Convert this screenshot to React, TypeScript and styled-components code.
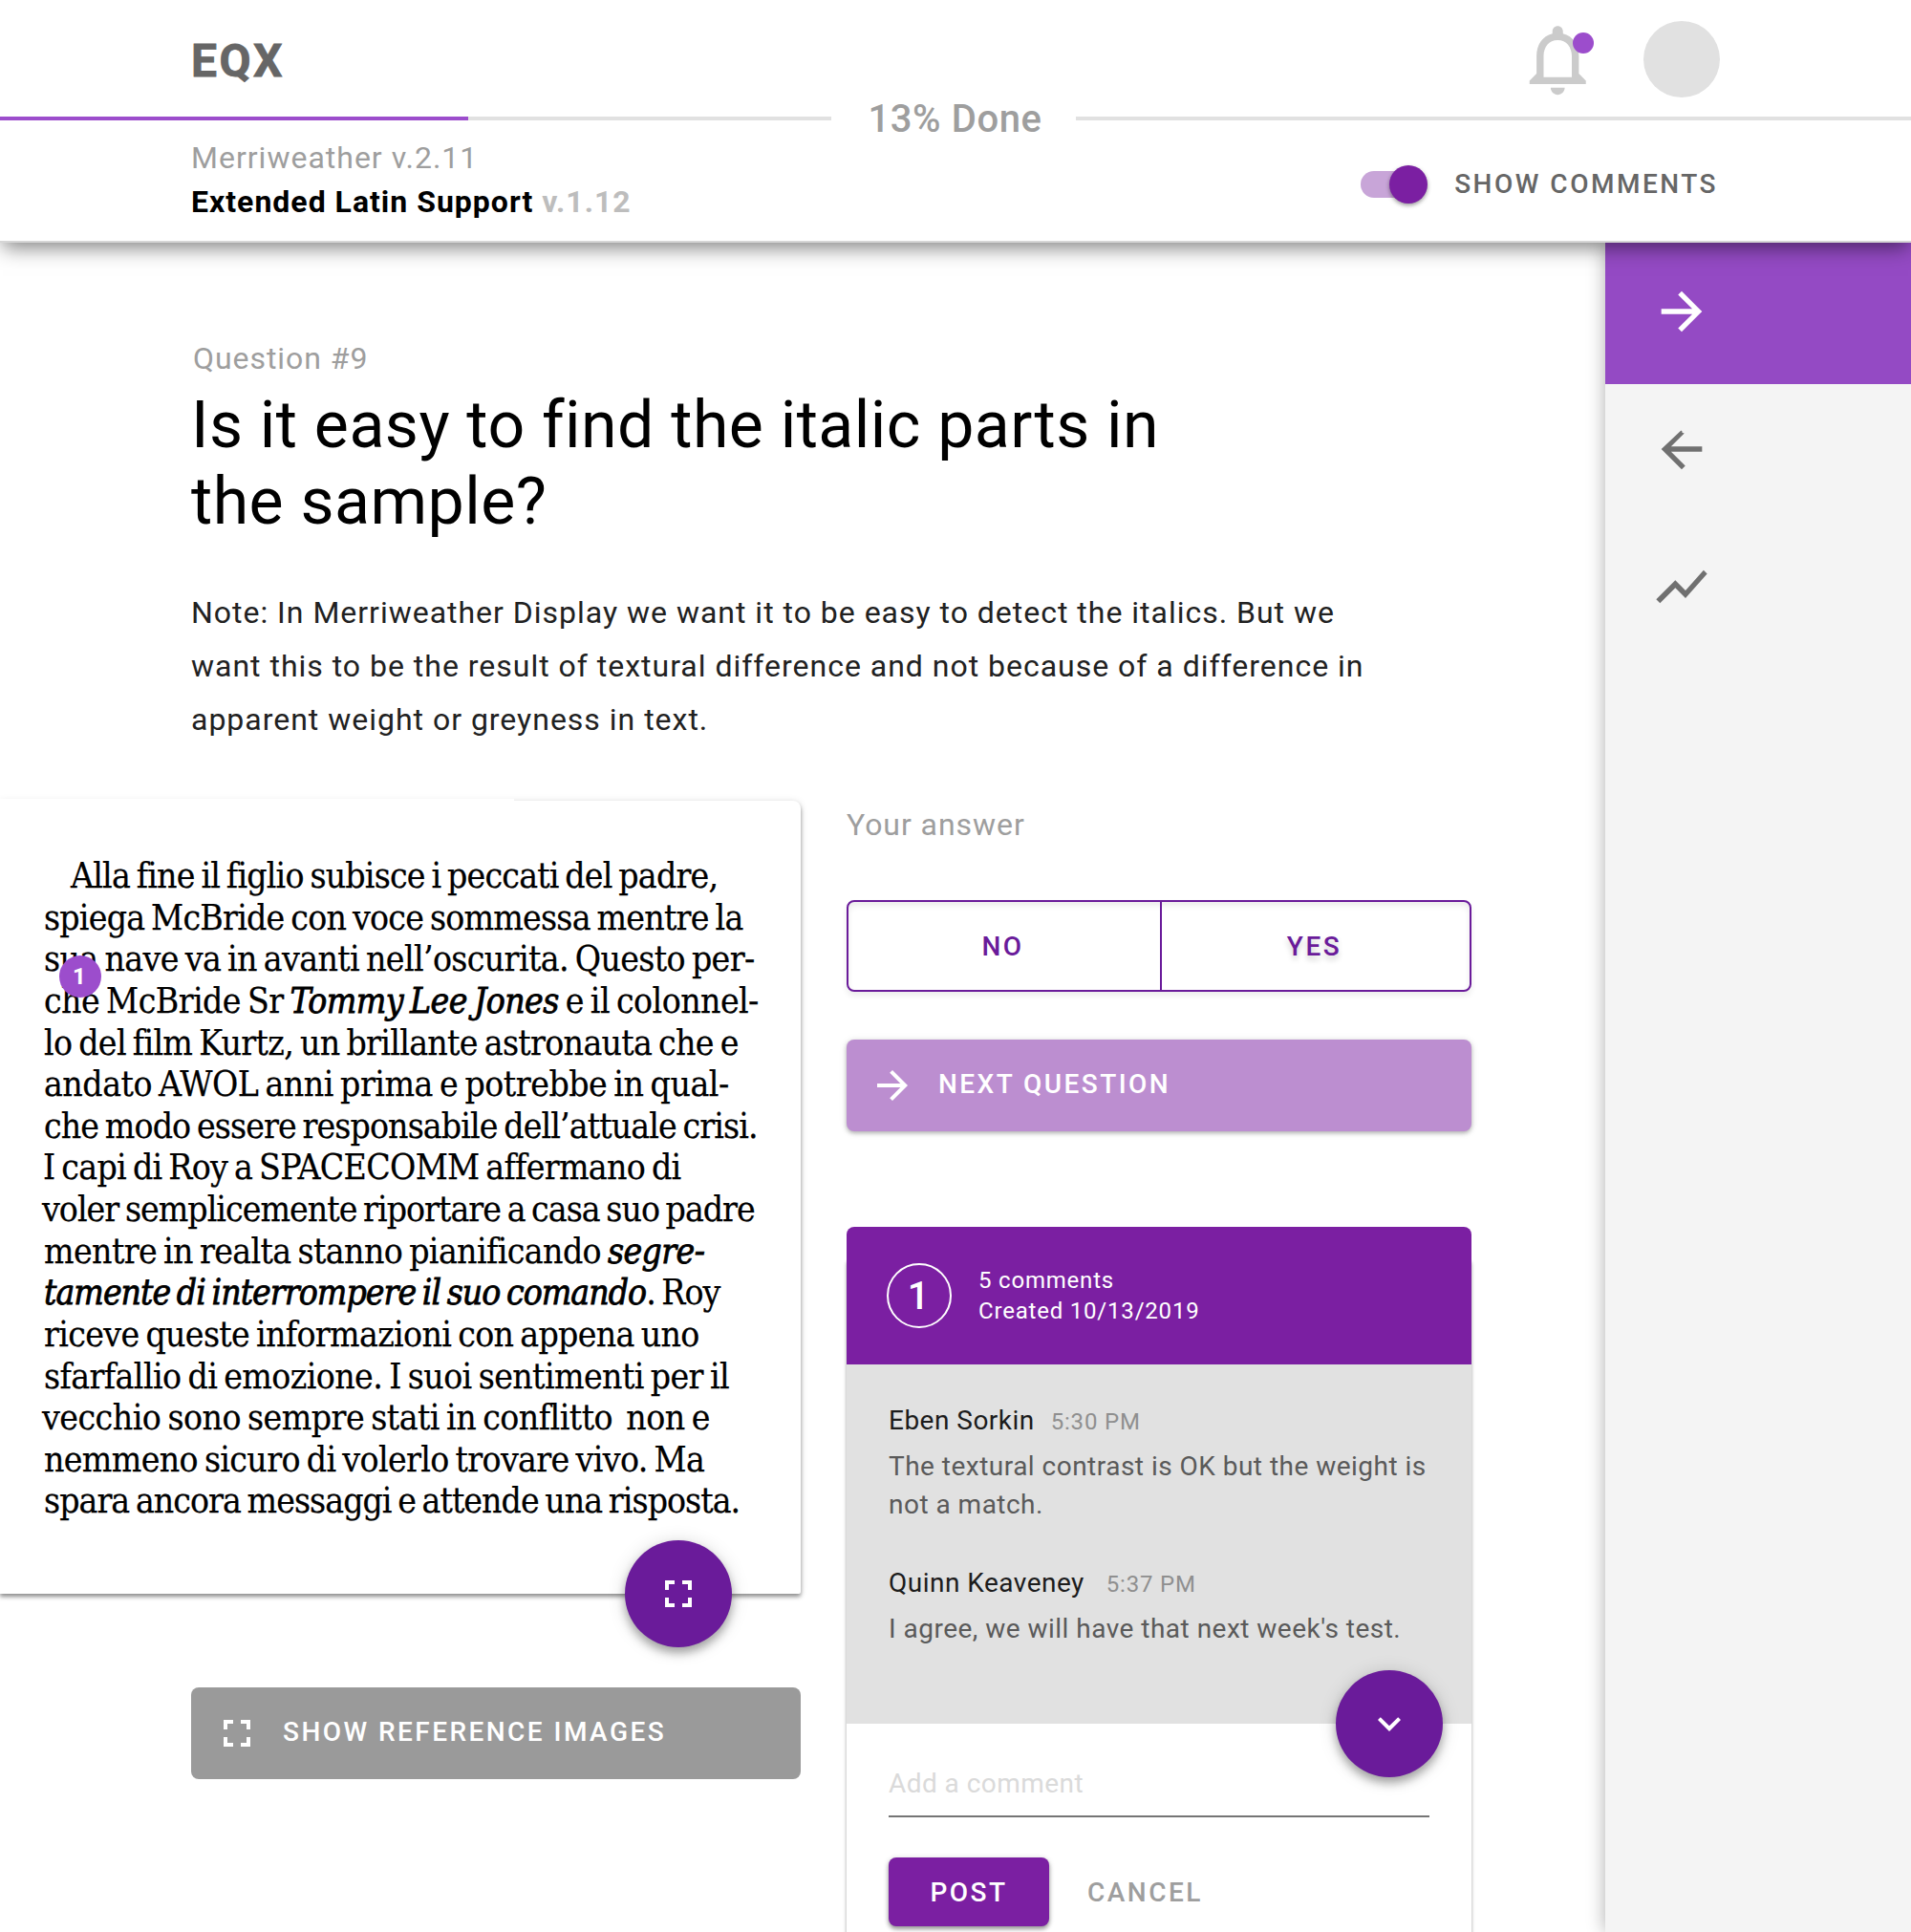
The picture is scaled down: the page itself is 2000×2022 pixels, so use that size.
import React from "react";
import styled, { createGlobalStyle, css } from "styled-components";

const purple = {
  main: "#7b1fa2",
  dark: "#6a1b9a",
  light: "#9c4dcc",
  disabled: "#bc8ed0",
};

const GlobalStyle = createGlobalStyle`
  *, *::before, *::after { box-sizing: border-box; }
  body {
    margin: 0;
    background: #fff;
    color: #000;
    font-family: Roboto, "Liberation Sans", sans-serif;
  }
  button, input { font-family: inherit; }
`;

const Page = styled.div`
  display: flex;
  flex-direction: column;
  width: 2000px;
  height: 2022px;
  overflow: hidden;
`;

/* ---------- header ---------- */

const Header = styled.header`
  position: relative;
  z-index: 2;
  flex: none;
  height: 254px;
  background: #fff;
  border-bottom: 2px solid #d6d6d6;
  box-shadow: 0 8px 20px -3px rgba(0, 0, 0, 0.5);
`;

const TopBar = styled.div`
  display: flex;
  align-items: center;
  height: 122px;
  padding: 2px 200px 0;
`;

const Logo = styled.div`
  margin-right: auto;
  padding-top: 3px;
  font-size: 48px;
  font-weight: 700;
  letter-spacing: 2.4px;
  color: #666;
  -webkit-text-stroke: 0.8px currentColor;
`;

const Notifications = styled.div`
  position: relative;
  width: 88.5px;
  height: 88.5px;
  margin-right: 45.5px;
  color: #cbcbcb;
`;

const NotificationDot = styled.span`
  position: absolute;
  top: 16px;
  left: 60px;
  width: 22px;
  height: 22px;
  border-radius: 50%;
  background: ${purple.light};
`;

const Avatar = styled.div`
  width: 80px;
  height: 80px;
  border-radius: 50%;
  background: #e1e1e1;
`;

const Progress = styled.div`
  display: flex;
  align-items: center;
  height: 4px;
`;

const Track = styled.div<{ $width?: number }>`
  ${(p) => (p.$width ? `width: ${p.$width}px;` : "flex: 1;")}
  height: 4px;
  background: #e1e1e1;
`;

const TrackFill = styled.div`
  width: 490px;
  height: 4px;
  background: ${purple.light};
`;

const ProgressLabel = styled.div`
  width: 256px;
  padding-left: 3px;
  text-align: center;
  font-size: 40px;
  font-weight: 500;
  letter-spacing: 0.6px;
  color: #9e9e9e;
`;

const SubBar = styled.div`
  display: flex;
  justify-content: space-between;
  align-items: flex-start;
  padding: 16px 202px 0 200px;
`;

const ProjectTitle = styled.div`
  font-size: 32px;
  line-height: 46px;
  letter-spacing: 1px;
`;

const ProjectName = styled.div`
  color: #9e9e9e;
`;

const ProjectPart = styled.div`
  font-weight: 700;
  span {
    color: #bdbdbd;
  }
`;

const ToggleRow = styled.label`
  display: flex;
  align-items: center;
  gap: 28px;
  margin-top: 31px;
`;

const Switch = styled.span`
  display: flex;
  align-items: center;
  width: 70px;
  height: 40px;
`;

const SwitchTrack = styled.span`
  flex: none;
  width: 64px;
  height: 28px;
  border-radius: 14px;
  background: #c8a5d8;
`;

const SwitchThumb = styled.span`
  flex: none;
  width: 40px;
  height: 40px;
  margin-left: -34px;
  border-radius: 50%;
  background: ${purple.main};
  box-shadow: 0 2px 4px rgba(0, 0, 0, 0.4);
`;

const ToggleLabel = styled.span`
  padding-bottom: 2px;
  font-size: 28px;
  font-weight: 500;
  letter-spacing: 2.5px;
  color: #666;
`;

/* ---------- body ---------- */

const Body = styled.div`
  display: flex;
  flex: 1;
  min-height: 0;
`;

const Main = styled.main`
  width: 1680px;
  padding-top: 101px;
`;

const Sidebar = styled.nav`
  position: relative;
  width: 320px;
  background: #f4f4f4;
  box-shadow: 0 0 18px rgba(0, 0, 0, 0.32);
`;

const SideItem = styled.a<{ $active?: boolean }>`
  display: flex;
  align-items: center;
  height: 144px;
  padding-left: 48px;
  color: #707070;
  ${(p) =>
    p.$active &&
    css`
      height: 148px;
      margin-bottom: -4px;
      padding-bottom: 4px;
      color: #fff;
      background: #944ac4;
    `}
`;

const Intro = styled.section`
  height: 483px;
  padding-left: 200px;
`;

const QuestionNumber = styled.div`
  padding-left: 2px;
  font-size: 32px;
  line-height: 40px;
  letter-spacing: 0.95px;
  color: #9e9e9e;
`;

const Question = styled.h1`
  width: 1060px;
  margin: 10px 0 0;
  font-size: 68px;
  font-weight: 400;
  line-height: 80px;
  letter-spacing: 0.46px;
`;

const Note = styled.p`
  width: 1240px;
  margin: 48px 0 0;
  font-size: 32px;
  line-height: 56px;
  letter-spacing: 0.985px;
  color: #212121;
`;

const Columns = styled.div`
  display: flex;
  align-items: flex-start;
  gap: 48px;
`;

const SampleColumn = styled.section`
  width: 838px;
`;

const SampleCard = styled.div`
  position: relative;
  height: 830px;
  padding: 57px 0 0 46px;
  background: #fff;
  border-radius: 0 8px 2px 0;
  box-shadow: 0 3px 4px rgba(0, 0, 0, 0.4), 0 1px 8px rgba(0, 0, 0, 0.12);
  &::before {
    content: "";
    position: absolute;
    top: -2px;
    left: 0;
    width: 538px;
    height: 2px;
    background: #fff;
  }
`;

const SampleLine = styled.div<{ $spacing: number; $indent?: number }>`
  margin-left: ${(p) => p.$indent ?? 0}px;
  font-family: "DejaVu Serif Condensed", "Liberation Serif", serif;
  font-size: 37px;
  line-height: 43.63px;
  letter-spacing: ${(p) => p.$spacing}px;
  word-spacing: -3px;
  white-space: pre;
  -webkit-text-stroke: 0.25px currentColor;
  em {
    -webkit-text-stroke: 0.8px currentColor;
  }
`;

const Marker = styled.div`
  position: absolute;
  top: 162px;
  left: 62px;
  display: flex;
  align-items: center;
  justify-content: center;
  width: 44px;
  height: 44px;
  padding-right: 2px;
  border-radius: 50%;
  background: ${purple.light};
  color: #fff;
  font-size: 24px;
  font-weight: 700;
`;

const Fab = styled.button<{ $top: number; $left: number }>`
  position: absolute;
  top: ${(p) => p.$top}px;
  left: ${(p) => p.$left}px;
  display: flex;
  align-items: center;
  justify-content: center;
  width: 112px;
  height: 112px;
  padding: 0;
  border: 0;
  border-radius: 50%;
  background: ${purple.dark};
  color: #fff;
  box-shadow: 0 6px 10px rgba(0, 0, 0, 0.3), 0 2px 20px rgba(0, 0, 0, 0.14);
`;

const WideButton = styled.button<{ $color: string; $raised?: boolean }>`
  display: flex;
  align-items: center;
  gap: 24px;
  width: 100%;
  height: 96px;
  padding: 0 24px;
  border: 0;
  border-radius: 8px;
  background: ${(p) => p.$color};
  color: #fff;
  font-size: 28px;
  font-weight: 500;
  letter-spacing: 2.45px;
  box-shadow: ${(p) =>
    p.$raised
      ? "0 2px 4px rgba(0, 0, 0, 0.26), 0 1px 8px rgba(0, 0, 0, 0.1)"
      : "none"};
  span {
    padding-bottom: 4px;
  }
`;

const ReferenceAction = styled.div`
  margin: 98px 0 0 200px;
`;

const AnswerColumn = styled.section`
  width: 654px;
  padding-top: 5px;
`;

const AnswerLabel = styled.div`
  font-size: 32px;
  line-height: 40px;
  letter-spacing: 0.95px;
  color: #9e9e9e;
`;

const AnswerGroup = styled.div`
  display: grid;
  grid-template-columns: 328px 1fr;
  height: 96px;
  margin: 59px 0 50px;
  border: 2px solid ${purple.dark};
  border-radius: 8px;
  box-shadow: 0 4px 6px rgba(0, 0, 0, 0.08),
    inset 0 4px 6px rgba(0, 0, 0, 0.08);
`;

const AnswerOption = styled.button<{ $raised?: boolean }>`
  padding: 0 3px 0 0;
  border: 0;
  background: transparent;
  color: ${purple.dark};
  font-size: 28px;
  font-weight: 500;
  letter-spacing: 2.5px;
  text-shadow: ${(p) => (p.$raised ? "0 4px 6px rgba(0, 0, 0, 0.2)" : "none")};
  &:first-child {
    border-right: 2px solid ${purple.dark};
  }
`;

const Panel = styled.div`
  margin-top: 100px;
`;

const PanelHeader = styled.div`
  position: relative;
  z-index: 1;
  display: flex;
  align-items: center;
  gap: 28px;
  height: 144px;
  padding-left: 42px;
  border-radius: 8px 8px 0 0;
  background: ${purple.main};
  color: #fff;
  font-size: 24px;
  line-height: 32px;
  letter-spacing: 0.8px;
`;

const ThreadNumber = styled.div`
  display: flex;
  align-items: center;
  justify-content: center;
  width: 68px;
  height: 68px;
  padding: 2px 2px 0 0;
  border: 2px solid #fff;
  border-radius: 50%;
  font-size: 40px;
  font-weight: 500;
  letter-spacing: 0;
`;

const PanelBody = styled.div`
  margin-top: -108px;
  padding-top: 108px;
  background: #fff;
  box-shadow: 0 2px 4px rgba(0, 0, 0, 0.24), 0 0 3px rgba(0, 0, 0, 0.14);
`;

const CommentList = styled.div`
  position: relative;
  display: flex;
  flex-direction: column;
  gap: 42px;
  height: 376px;
  padding: 39px 30px 0 44px;
  background: #e1e1e1;
`;

const Comment = styled.article`
  font-size: 28px;
  line-height: 40px;
  letter-spacing: 0.48px;
`;

const CommentHead = styled.div<{ $gap: number }>`
  display: flex;
  align-items: baseline;
  gap: ${(p) => p.$gap}px;
  height: 40px;
  margin-bottom: 8px;
  color: #1c1c1c;
`;

const CommentTime = styled.time`
  font-size: 24px;
  letter-spacing: 0.8px;
  color: #8f8f8f;
`;

const CommentText = styled.p`
  margin: 0;
  color: #5a5a5a;
`;

const Form = styled.div`
  height: 300px;
  padding: 42px 44px 0;
`;

const CommentInput = styled.input`
  display: block;
  width: 566px;
  height: 56px;
  padding: 0 0 14px;
  border: 0;
  border-bottom: 2px solid #757575;
  background: transparent;
  font-size: 28px;
  line-height: 40px;
  letter-spacing: 0.45px;
  &::placeholder {
    color: #dadada;
    opacity: 1;
  }
`;

const FormActions = styled.div`
  display: flex;
  gap: 40px;
  margin-top: 42px;
`;

const TextButton = styled.button<{ $primary?: boolean }>`
  height: 72px;
  padding: 0;
  border: 0;
  background: transparent;
  color: #9e9e9e;
  font-size: 28px;
  font-weight: 500;
  letter-spacing: 2.5px;
  ${(p) =>
    p.$primary &&
    css`
      width: 168px;
      border-radius: 8px;
      background: ${purple.main};
      color: #fff;
      box-shadow: 0 3px 4px rgba(0, 0, 0, 0.35), 0 1px 6px rgba(0, 0, 0, 0.15);
    `}
`;

/* ---------- icons ---------- */

const paths = {
  bell: "M12 22c1.1 0 2-.9 2-2h-4c0 1.1.9 2 2 2zm6-6v-5c0-3.07-1.64-5.64-4.5-6.32V4c0-.83-.67-1.5-1.5-1.5s-1.5.67-1.5 1.5v.68C7.63 5.36 6 7.92 6 11v5l-2 2v1h16v-1l-2-2zm-2 1H8v-6c0-2.48 1.51-4.5 4-4.5s4 2.02 4 4.5v6z",
  forward: "M12 4l-1.41 1.41L16.17 11H4v2h12.17l-5.58 5.59L12 20l8-8z",
  back: "M20 11H7.83l4.9-4.9L11.1 4.9 4 12l8 8 1.41-1.41L7.83 13H20v-2z",
  chart: "M3.5 18.49l6-6.01 4 4L22 6.92l-1.41-1.41-7.09 7.97-4-4L2 16.99z",
  fullscreen:
    "M7 14H5v5h5v-2H7v-3zm-2-4h2V7h3V5H5v5zm12 7h-3v2h5v-5h-2v3zM14 5v2h3v3h2V5h-5z",
  expand: "M16.59 8.59L12 13.17 7.41 8.59 6 10l6 6 6-6z",
};

function Icon({ name, size }: { name: keyof typeof paths; size: number }) {
  return (
    <svg
      width={size}
      height={size}
      viewBox="0 0 24 24"
      fill="currentColor"
      display="block"
      aria-hidden="true"
    >
      <path d={name === "back" ? "M20 11H7.83l5.2-5.2-.9-.25.1-.4-.46-.45L4 12l8 8 1.41-1.41L7.83 13H20v-2z" : paths[name]} />
    </svg>
  );
}

/* ---------- content ---------- */

type Line = { text: React.ReactNode; spacing: number; indent?: number };

const sample: Line[] = [
  { text: "Alla fine il figlio subisce i peccati del padre,", spacing: -0.8, indent: 28 },
  { text: "spiega McBride con voce sommessa mentre la", spacing: -0.76 },
  { text: "sua nave va in avanti nell’oscurita. Questo per-", spacing: -0.62 },
  {
    text: (
      <>
        che McBride Sr <em>Tommy Lee Jones</em> e il colonnel-
      </>
    ),
    spacing: -0.56,
  },
  { text: "lo del film Kurtz, un brillante astronauta che e", spacing: -0.67 },
  { text: "andato AWOL anni prima e potrebbe in qual-", spacing: -0.47 },
  { text: "che modo essere responsabile dell’attuale crisi.", spacing: -0.88 },
  { text: "I capi di Roy a SPACECOMM affermano di", spacing: -0.69, indent: -1 },
  { text: "voler semplicemente riportare a casa suo padre", spacing: -0.96, indent: -2 },
  {
    text: (
      <>
        mentre in realta stanno pianificando <em>segre-</em>
      </>
    ),
    spacing: -0.6,
  },
  {
    text: (
      <>
        <em>tamente di interrompere il suo comando</em>. Roy
      </>
    ),
    spacing: -0.96,
  },
  { text: "riceve queste informazioni con appena uno", spacing: -0.65 },
  { text: "sfarfallio di emozione. I suoi sentimenti per il", spacing: -0.58 },
  { text: "vecchio sono sempre stati in conflitto  non e", spacing: -0.51, indent: -2 },
  { text: "nemmeno sicuro di volerlo trovare vivo. Ma", spacing: -0.64 },
  { text: "spara ancora messaggi e attende una risposta.", spacing: -0.94 },
];

const comments = [
  {
    author: "Eben Sorkin",
    time: "5:30 PM",
    gap: 17,
    text: "The textural contrast is OK but the weight is not a match.",
  },
  {
    author: "Quinn Keaveney",
    time: "5:37 PM",
    gap: 23,
    text: "I agree, we will have that next week's test.",
  },
];

export default function App() {
  return (
    <Page>
      <GlobalStyle />
      <Header>
        <TopBar>
          <Logo>EQX</Logo>
          <Notifications>
            <Icon name="bell" size={88.5} />
            <NotificationDot />
          </Notifications>
          <Avatar />
        </TopBar>
        <Progress>
          <Track $width={870}>
            <TrackFill />
          </Track>
          <ProgressLabel>13% Done</ProgressLabel>
          <Track />
        </Progress>
        <SubBar>
          <ProjectTitle>
            <ProjectName>Merriweather v.2.11</ProjectName>
            <ProjectPart>
              Extended Latin Support <span>v.1.12</span>
            </ProjectPart>
          </ProjectTitle>
          <ToggleRow>
            <Switch>
              <SwitchTrack />
              <SwitchThumb />
            </Switch>
            <ToggleLabel>SHOW COMMENTS</ToggleLabel>
          </ToggleRow>
        </SubBar>
      </Header>

      <Body>
        <Main>
          <Intro>
            <QuestionNumber>Question #9</QuestionNumber>
            <Question>Is it easy to find the italic parts in the sample?</Question>
            <Note>
              Note: In Merriweather Display we want it to be easy to detect the
              italics. But we want this to be the result of textural difference
              and not because of a difference in apparent weight or greyness in
              text.
            </Note>
          </Intro>

          <Columns>
            <SampleColumn>
              <SampleCard>
                {sample.map((line, i) => (
                  <SampleLine key={i} $spacing={line.spacing} $indent={line.indent}>
                    {line.text}
                  </SampleLine>
                ))}
                <Marker>1</Marker>
                <Fab $top={774} $left={654}>
                  <Icon name="fullscreen" size={48} />
                </Fab>
              </SampleCard>
              <ReferenceAction>
                <WideButton $color="#9a9a9a">
                  <Icon name="fullscreen" size={48} />
                  <span>SHOW REFERENCE IMAGES</span>
                </WideButton>
              </ReferenceAction>
            </SampleColumn>

            <AnswerColumn>
              <AnswerLabel>Your answer</AnswerLabel>
              <AnswerGroup>
                <AnswerOption>NO</AnswerOption>
                <AnswerOption $raised>YES</AnswerOption>
              </AnswerGroup>
              <WideButton $color={purple.disabled} $raised>
                <Icon name="forward" size={48} />
                <span>NEXT QUESTION</span>
              </WideButton>

              <Panel>
                <PanelHeader>
                  <ThreadNumber>1</ThreadNumber>
                  <div>
                    <div>5 comments</div>
                    <div>Created 10/13/2019</div>
                  </div>
                </PanelHeader>
                <PanelBody>
                  <CommentList>
                    {comments.map((c) => (
                      <Comment key={c.author}>
                        <CommentHead $gap={c.gap}>
                          <span>{c.author}</span>
                          <CommentTime>{c.time}</CommentTime>
                        </CommentHead>
                        <CommentText>{c.text}</CommentText>
                      </Comment>
                    ))}
                    <Fab $top={320} $left={512}>
                      <Icon name="expand" size={48} />
                    </Fab>
                  </CommentList>
                  <Form>
                    <CommentInput placeholder="Add a comment" />
                    <FormActions>
                      <TextButton $primary>POST</TextButton>
                      <TextButton>CANCEL</TextButton>
                    </FormActions>
                  </Form>
                </PanelBody>
              </Panel>
            </AnswerColumn>
          </Columns>
        </Main>

        <Sidebar>
          <SideItem $active>
            <Icon name="forward" size={64} />
          </SideItem>
          <SideItem>
            <Icon name="back" size={64} />
          </SideItem>
          <SideItem>
            <Icon name="chart" size={64} />
          </SideItem>
        </Sidebar>
      </Body>
    </Page>
  );
}
